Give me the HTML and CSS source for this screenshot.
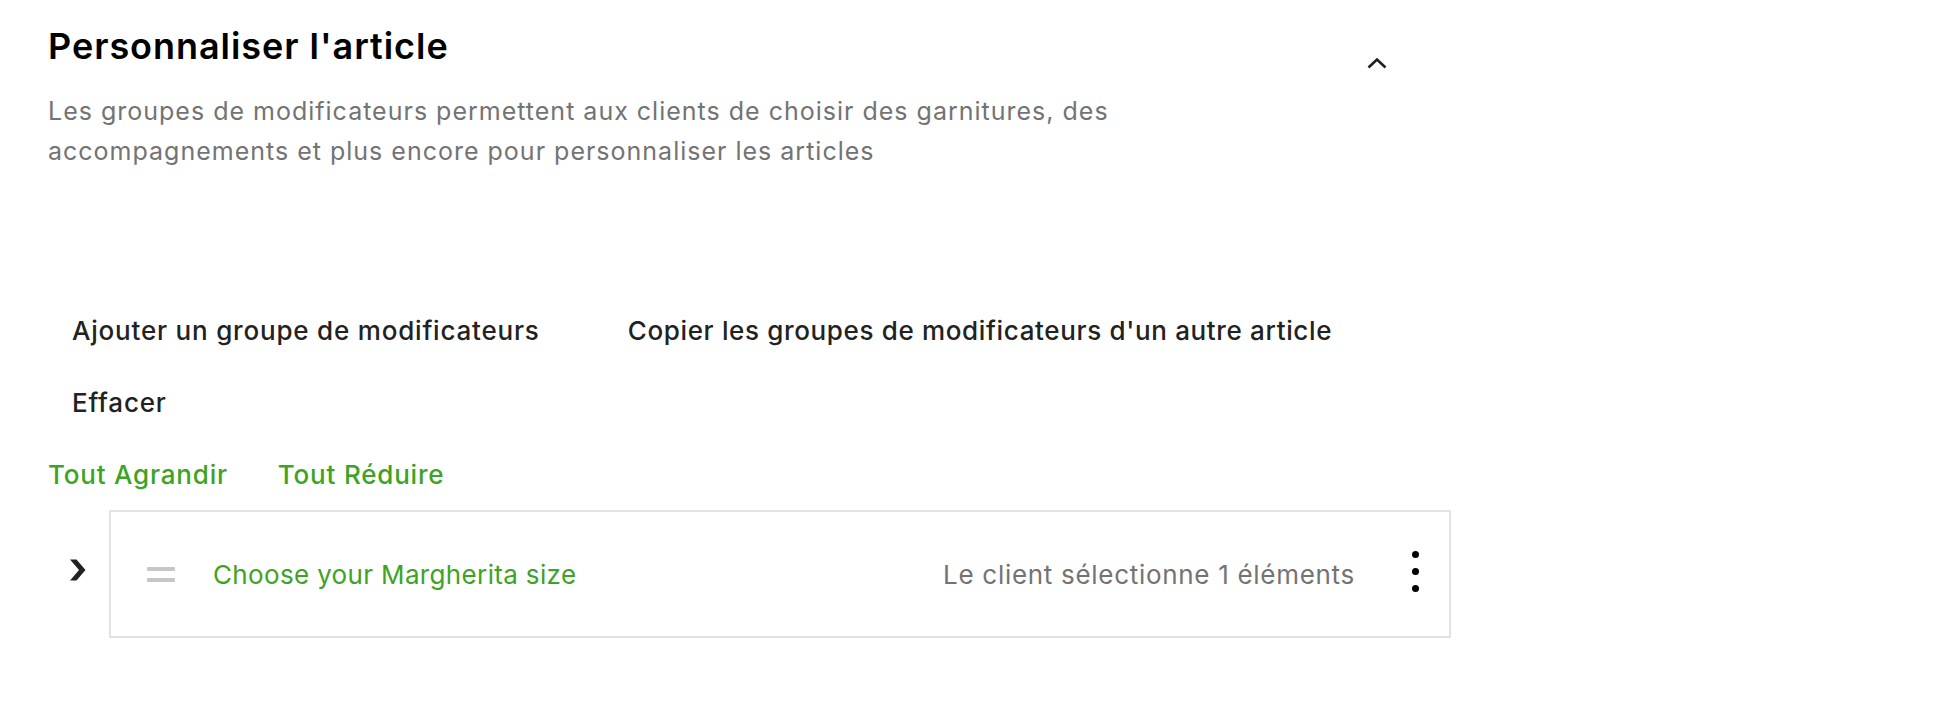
FILE: index.html
```html
<!DOCTYPE html>
<html lang="fr">
<head>
<meta charset="utf-8">
<title>Personnaliser l'article</title>
<link rel="stylesheet" href="styles.css">
</head>
<body>
<section class="section">
  <header class="header">
    <div class="header-text">
      <h2 class="title">Personnaliser l'article</h2>
      <p class="desc">Les groupes de modificateurs permettent aux clients de choisir des garnitures, des accompagnements et plus encore pour personnaliser les articles</p>
    </div>
    <button class="collapse" aria-label="Réduire">
      <svg width="20" height="12" viewBox="0 0 20 12"><polyline points="1.5,10.5 10,2.5 18.5,10.5" fill="none" stroke="#222" stroke-width="2.6"/></svg>
    </button>
  </header>

  <div class="actions">
    <button class="action">Ajouter un groupe de modificateurs</button>
    <button class="action action-wide">Copier les groupes de modificateurs d'un autre article</button>
    <button class="action">Effacer</button>
  </div>

  <div class="links">
    <a class="link">Tout Agrandir</a>
    <a class="link">Tout Réduire</a>
  </div>

  <div class="group-row">
    <div class="expander">
      <svg width="17" height="22" viewBox="0 0 17 22"><polygon points="1,0.5 7.5,0.5 16.5,11 7.5,21.5 1,21.5 10,11" fill="#222"/></svg>
    </div>
    <div class="card">
      <span class="handle"><i></i><i></i></span>
      <span class="group-name">Choose your Margherita size</span>
      <span class="group-info">Le client sélectionne 1 éléments</span>
      <span class="kebab"><i></i><i></i><i></i></span>
    </div>
  </div>
</section>
</body>
</html>
```
FILE: styles.css
```css
* { box-sizing: border-box; }
html, body { margin: 0; background: #fff; }
body { font-family: Inter, "Noto Sans", Arial, sans-serif; color: #222; }

.section {
  width: 1451px;
  padding: 24px 0 0 48px;
}

.header {
  display: flex;
  justify-content: space-between;
  align-items: flex-start;
}
.header-text { max-width: 1140px; }
.title {
  margin: 0;
  font-size: 36px;
  line-height: 44px;
  font-weight: 600;
  letter-spacing: 0.95px;
  color: #000;
}
.desc {
  margin: 23px 0 0;
  font-size: 25px;
  line-height: 40px;
  letter-spacing: 1px;
  color: #737373;
}
.collapse {
  width: 48px;
  height: 48px;
  margin: 15px 50px 0 0;
  border: 0;
  background: none;
  padding: 0;
  display: flex;
  align-items: center;
  justify-content: center;
}

.actions {
  display: flex;
  flex-wrap: wrap;
  column-gap: 40px;
  row-gap: 16px;
  margin-top: 132px;
  width: 1403px;
}
.action {
  height: 56px;
  padding: 0 24px;
  border: 0;
  background: none;
  font-family: inherit;
  font-size: 26px;
  line-height: 56px;
  font-weight: 500;
  letter-spacing: 0.8px;
  color: #222;
}
.action-wide { letter-spacing: 0.65px; }

.links {
  display: flex;
  gap: 50px;
  margin-top: 20px;
}
.link {
  font-size: 26px;
  line-height: 48px;
  font-weight: 500;
  letter-spacing: 0.8px;
  color: #3ea324;
}

.group-row {
  display: flex;
  align-items: center;
  margin-top: 11px;
}
.expander {
  width: 61px;
  display: flex;
  justify-content: center;
  padding-right: 1px;
  margin-top: -8px;
}
.card {
  width: 1343px;
  height: 128px;
  border: 2px solid #e2e2e2;
  display: flex;
  align-items: center;
  padding: 0 30px 0 36px;
}
.handle {
  display: flex;
  flex-direction: column;
  gap: 7px;
  width: 28px;
}
.handle i {
  display: block;
  height: 4px;
  background: #c6c6c6;
  border-radius: 1px;
}
.group-name {
  margin-left: 38px;
  font-size: 26px;
  letter-spacing: 0.35px;
  color: #3ea324;
  flex: 1;
}
.group-info {
  font-size: 26px;
  letter-spacing: 0.7px;
  color: #737373;
}
.kebab {
  display: flex;
  flex-direction: column;
  align-items: center;
  gap: 10px;
  margin-left: 57px;
  margin-top: -5px;
}
.kebab i {
  display: block;
  width: 7px;
  height: 7px;
  border-radius: 50%;
  background: #000;
}
```
